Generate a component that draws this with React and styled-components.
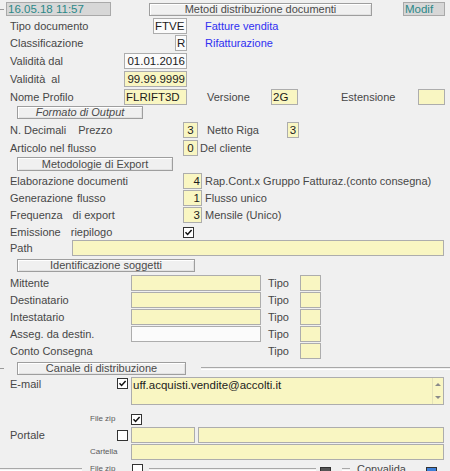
import React from "react"
import styled, { createGlobalStyle } from "styled-components"

const Global = createGlobalStyle`
  html, body { margin:0; padding:0; background:#f0f0f0; }
  body { font-family:"Liberation Sans", Arial, sans-serif; font-size:11px; color:#474747; }
  #root { width:450px; height:471px; overflow:hidden; }
`

const Page = styled.div`
  display:flex;
  flex-direction:column;
  width:450px;
  height:471px;
  overflow:hidden;
  padding-top:2px;
  box-sizing:border-box;
`

const Header = styled.div`
  display:flex;
  align-items:center;
  height:14px;
`

const Dash = styled.div`
  width:${p => p.$w || 4}px;
  height:1px;
  background:#9a9a9a;
  margin-left:${p => p.$ml || 0}px;
  flex:none;
`

const Stamp = styled.div`
  box-sizing:border-box;
  width:${p => p.$w}px;
  height:14px;
  margin-left:${p => p.$ml || 0}px;
  background:#d7d7d7;
  border:1px solid #a9a9a9;
  color:#2b8888;
  font-size:11.5px;
  line-height:12px;
  padding-left:1px;
  flex:none;
`

const Caption = styled.div`
  box-sizing:border-box;
  width:${p => p.$w}px;
  height:${p => p.$h || 13}px;
  margin-left:${p => p.$ml || 0}px;
  border:1px solid #9e9e9e;
  box-shadow:inset 1px 1px 0 #fff, inset -1px -1px 0 #e2e2e2;
  background:#f0f0f0;
  text-align:center;
  line-height:${p => (p.$h || 13) - 2}px;
  font-style:${p => (p.$italic ? "italic" : "normal")};
  color:#4a4a4a;
  flex:none;
`

const Row = styled.div`
  display:flex;
  align-items:${p => (p.$top ? "flex-start" : "center")};
  height:${p => p.$h || 16}px;
  margin-top:${p => p.$mt || 0}px;
  padding-left:${p => (p.$pl === undefined ? 10 : p.$pl)}px;
  flex:none;
`

const Label = styled.div`
  width:${p => p.$w}px;
  margin-left:${p => p.$ml || 0}px;
  flex:none;
  white-space:nowrap;
  font-size:${p => (p.$small ? "8px" : "11px")};
  line-height:14px;
  color:${p => (p.$small ? "#5a5a5a" : "#474747")};
  span + span { margin-left:${p => p.$sp || 6}px; }
`

const Text = styled.div`
  margin-left:${p => p.$ml || 0}px;
  white-space:nowrap;
  color:${p => (p.$blue ? "#2f2ff2" : "#474747")};
`

const Field = styled.div`
  box-sizing:border-box;
  position:relative;
  width:${p => (p.$w ? p.$w + "px" : "auto")};
  flex:${p => (p.$w ? "none" : "1")};
  height:100%;
  margin-left:${p => p.$ml || 0}px;
  margin-right:${p => p.$mr || 0}px;
  background:${p => (p.$white ? "#fbfbfb" : "#f9f6c2")};
  border:1px solid #adadad;
  text-align:${p => p.$align || "left"};
  padding:0 1px 0 1px;
  line-height:14px;
  font-size:11.5px;
  color:#1c1c1c;
  white-space:nowrap;
  overflow:hidden;
`

const Check = styled.div`
  box-sizing:border-box;
  width:11px;
  height:11px;
  margin-top:${p => p.$mt || 0}px;
  border:1px solid #333;
  background:#fff;
  flex:none;
  display:flex;
  align-items:center;
  justify-content:center;
`

const Scroll = styled.div`
  position:absolute;
  right:0;
  top:0;
  bottom:0;
  width:11px;
  display:flex;
  flex-direction:column;
  justify-content:space-between;
  align-items:center;
  padding:5px 0;
  box-sizing:border-box;
  border-left:1px solid #e4e2b8;
  background:#f9f6c2;
`

const Arrow = styled.div`
  width:0;
  height:0;
  border-left:3px solid transparent;
  border-right:3px solid transparent;
  ${p => (p.$down ? "border-top:3px solid #8a8a8a;" : "border-bottom:3px solid #8a8a8a;")}
`

const Groove = styled.div`
  flex:${p => (p.$w ? "none" : "1")};
  width:${p => (p.$w ? p.$w + "px" : "auto")};
  margin-left:${p => p.$ml || 0}px;
  height:1px;
  border-top:1px solid #a8a8a8;
  border-bottom:1px solid #fff;
`

const MiniIcon = styled.div`
  width:9px;
  height:6px;
  margin-left:${p => p.$ml || 0}px;
  background:${p => p.$bg};
  border:1px solid #333;
  align-self:flex-end;
  flex:none;
`

function Tick({ on, mt }) {
  return (
    <Check $mt={mt}>
      {on && (
        <svg width="9" height="9" viewBox="0 0 9 9">
          <path d="M1.5 4.2 L3.6 6.4 L7.6 2" fill="none" stroke="#111" strokeWidth="1.5" />
        </svg>
      )}
    </Check>
  )
}

function TipoRow({ label, mt, white, noField }) {
  return (
    <Row $mt={mt}>
      <Label $w={121}>{label}</Label>
      {noField ? <Label $w={137} /> : <Field $w={130} $white={white} />}
      <Label $w={32} $ml={noField ? 0 : 7}>Tipo</Label>
      <Field $w={21} />
    </Row>
  )
}

export default function App() {
  return (
    <Page>
      <Global />
      <Header>
        <Dash $w={4} />
        <Stamp $w={105} $ml={2}>16.05.18 11:57</Stamp>
        <Caption $w={223} $ml={38}>Metodi distribuzione documenti</Caption>
        <Stamp $w={42} $ml={31}>Modif</Stamp>
      </Header>

      <Row $mt={2}>
        <Label $w={143}>Tipo documento</Label>
        <Field $w={34} $white>FTVE</Field>
        <Text $ml={18} $blue>Fatture vendita</Text>
      </Row>
      <Row $mt={1}>
        <Label $w={165}>Classificazione</Label>
        <Field $w={12} $white>R</Field>
        <Text $ml={18} $blue>Rifatturazione</Text>
      </Row>
      <Row $mt={2}>
        <Label $w={114}>Validità dal</Label>
        <Field $w={63} $white $align="right">01.01.2016</Field>
      </Row>
      <Row $mt={2}>
        <Label $w={114}>Validità&nbsp; al</Label>
        <Field $w={63} $align="right">99.99.9999</Field>
      </Row>
      <Row $mt={2}>
        <Label $w={114}>Nome Profilo</Label>
        <Field $w={63}>FLRIFT3D</Field>
        <Label $w={64} $ml={20}>Versione</Label>
        <Field $w={27}>2G</Field>
        <Label $w={77} $ml={43}>Estensione</Label>
        <Field $w={27} />
      </Row>

      <Row $mt={1} $h={13} $pl={17}>
        <Caption $w={126} $italic>Formato di Output</Caption>
      </Row>

      <Row $mt={3}>
        <Label $w={173} $sp={12}><span>N. Decimali</span><span>Prezzo</span></Label>
        <Field $w={15} $align="center">3</Field>
        <Label $w={80} $ml={9}>Netto Riga</Label>
        <Field $w={12} $align="center">3</Field>
      </Row>
      <Row $mt={2}>
        <Label $w={173}>Articolo nel flusso</Label>
        <Field $w={15} $align="center">0</Field>
        <Text $ml={2}>Del cliente</Text>
      </Row>

      <Row $mt={1} $h={14} $pl={17}>
        <Caption $w={156} $h={14}>Metodologie di Export</Caption>
      </Row>

      <Row $mt={2}>
        <Label $w={173}>Elaborazione documenti</Label>
        <Field $w={19} $align="right">4</Field>
        <Text $ml={3}>Rap.Cont.x Gruppo Fatturaz.(conto consegna)</Text>
      </Row>
      <Row $mt={1}>
        <Label $w={173} $sp={4}><span>Generazione</span><span>flusso</span></Label>
        <Field $w={19} $align="right">1</Field>
        <Text $ml={3}>Flusso unico</Text>
      </Row>
      <Row $mt={1}>
        <Label $w={173} $sp={10}><span>Frequenza</span><span>di export</span></Label>
        <Field $w={19} $align="right">3</Field>
        <Text $ml={3}>Mensile (Unico)</Text>
      </Row>
      <Row $mt={1}>
        <Label $w={173} $sp={10}><span>Emissione</span><span>riepilogo</span></Label>
        <Tick on />
      </Row>
      <Row>
        <Label $w={62}>Path</Label>
        <Field $mr={6} />
      </Row>

      <Row $mt={3} $h={13} $pl={17}>
        <Caption $w={178}>Identificazione soggetti</Caption>
      </Row>

      <TipoRow label="Mittente" mt={3} />
      <TipoRow label="Destinatario" mt={1} />
      <TipoRow label="Intestatario" mt={1} />
      <TipoRow label="Asseg. da destin." mt={1} white />
      <TipoRow label="Conto Consegna" mt={1} noField />

      <Row $mt={3} $h={13} $pl={0}>
        <Dash $w={4} />
        <Caption $w={169} $ml={13}>Canale di distribuzione</Caption>
        <Groove $ml={15} />
      </Row>

      <Row $mt={2} $h={28} $top>
        <Label $w={107}>E-mail</Label>
        <Tick on mt={1} />
        <Field $ml={3} $mr={6}>
          uff.acquisti.vendite@accolti.it
          <Scroll>
            <Arrow />
            <Arrow $down />
          </Scroll>
        </Field>
      </Row>

      <Row $mt={7} $h={14} $pl={90}>
        <Label $w={41} $small>File zip</Label>
        <Tick on />
      </Row>
      <Row $mt={1}>
        <Label $w={107}>Portale</Label>
        <Tick />
        <Field $w={64} $ml={3} />
        <Field $ml={3} $mr={6} />
      </Row>
      <Row $mt={1} $pl={90}>
        <Label $w={41} $small>Cartella</Label>
        <Field $mr={6} />
      </Row>
      <Row $mt={3} $h={12} $pl={0}>
        <Groove $w={82} />
        <Label $w={42} $ml={8} $small>File zip</Label>
        <Tick />
        <Groove $w={167} $ml={6} />
        <MiniIcon $ml={4} $bg="#555" />
        <Groove $w={8} $ml={11} />
        <Text $ml={7}>Convalida</Text>
        <MiniIcon $ml={20} $bg="#3d7fd8" />
      </Row>
    </Page>
  )
}
